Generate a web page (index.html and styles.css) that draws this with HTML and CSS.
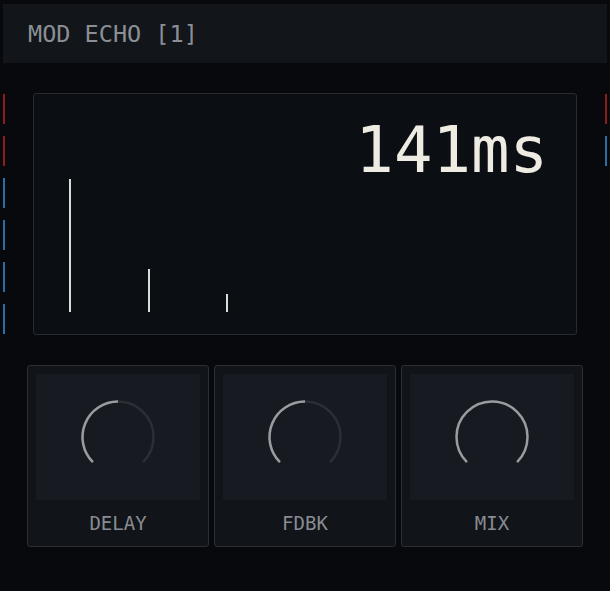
FILE: index.html
```html
<!DOCTYPE html>
<html lang="en">
<head>
    <meta charset="UTF-8">
    <title>Mod Echo</title>
    <meta name="viewport" content="width=device-width, initial-scale=1.0">
    <link rel="stylesheet" href="styles.css">
</head>
<body>
    <div class="header">MOD ECHO [1]</div>

    <div class="main">
        <!-- input level markers -->
        <div class="markers">
            <span class="mark red"></span>
            <span class="mark red"></span>
            <span class="mark blue"></span>
            <span class="mark blue"></span>
            <span class="mark blue"></span>
            <span class="mark blue"></span>
        </div>

        <div class="display">
            <div class="readout">141ms</div>
            <div class="taps">
                <span class="tap" style="height: 133px"></span>
                <span class="tap" style="height: 43px"></span>
                <span class="tap" style="height: 18px"></span>
            </div>
        </div>

        <!-- output level markers -->
        <div class="markers">
            <span class="mark red"></span>
            <span class="mark blue"></span>
        </div>
    </div>

    <div class="knobs">
        <div class="knob">
            <div class="knob-face">
                <svg width="80" height="80" viewBox="0 0 80 80">
                    <path class="track" d="M14.9 65.1 A35.5 35.5 0 1 1 65.1 65.1"/>
                    <path class="value" d="M14.9 65.1 A35.5 35.5 0 0 1 40 4.5"/>
                </svg>
            </div>
            <div class="knob-label">DELAY</div>
        </div>
        <div class="knob">
            <div class="knob-face">
                <svg width="80" height="80" viewBox="0 0 80 80">
                    <path class="track" d="M14.9 65.1 A35.5 35.5 0 1 1 65.1 65.1"/>
                    <path class="value" d="M14.9 65.1 A35.5 35.5 0 0 1 40 4.5"/>
                </svg>
            </div>
            <div class="knob-label">FDBK</div>
        </div>
        <div class="knob">
            <div class="knob-face">
                <svg width="80" height="80" viewBox="0 0 80 80">
                    <path class="value" d="M14.9 65.1 A35.5 35.5 0 1 1 65.1 65.1"/>
                </svg>
            </div>
            <div class="knob-label">MIX</div>
        </div>
    </div>
</body>
</html>
```

FILE: styles.css
```css
body {
    margin: 0;
    background: #07090c;
    font-family: 'DejaVu Sans Mono', monospace;
    color: #8b8f95;
    height: 591px;
    overflow: hidden;
}
.header {
    margin: 4px 3px 0;
    height: 59px;
    padding-left: 25px;
    background: #12151a;
    display: flex;
    align-items: center;
    font-size: 23.5px;
}
.main {
    display: flex;
    align-items: flex-start;
    margin-top: 30px;
}
.markers {
    display: flex;
    flex-direction: column;
    gap: 12px;
    width: 2px;
    margin-left: 3px;
    padding-top: 1px;
}
.mark {
    display: block;
    width: 2px;
    height: 30px;
}
.mark.red {
    background: #8e1c1f;
}
.mark.blue {
    background: #2a6ea8;
}
.display {
    width: 542px;
    height: 240px;
    margin-left: 28px;
    margin-right: 25px;
    border: 1px solid #262a31;
    border-radius: 3px;
    background: #0b0e13;
    display: grid;
    grid-template-areas: "all";
}
.readout {
    grid-area: all;
    justify-self: end;
    align-self: start;
    margin: 25px 28px 0 0;
    font-size: 64px;
    line-height: 63px;
    color: #eeebe2;
}
.taps {
    grid-area: all;
    align-self: end;
    display: flex;
    align-items: flex-end;
    gap: 76px;
    padding: 0 0 22px 35px;
}
.tap {
    display: block;
    width: 2px;
    background: #dcdcdc;
}
.tap + .tap {
    margin-left: 1px;
}
.tap + .tap + .tap {
    margin-left: 0;
}
.knobs {
    display: flex;
    gap: 5px;
    margin: 30px 0 0 27px;
    width: 556px;
}
.knob {
    flex: 1;
    box-sizing: border-box;
    height: 182px;
    border: 1px solid #2a2e35;
    border-radius: 3px;
    background: #111419;
    padding: 8px 8px 0;
    display: flex;
    flex-direction: column;
}
.knob-face {
    height: 126px;
    background: #171a21;
    display: flex;
    align-items: center;
    justify-content: center;
}
.knob-face svg {
    display: block;
}
.knob-face path {
    fill: none;
    stroke-width: 2.5;
}
.track {
    stroke: #2b2e35;
}
.value {
    stroke: #9a9ca0;
}
.knob-label {
    flex: 1;
    display: flex;
    align-items: center;
    justify-content: center;
    font-size: 19px;
    color: #888c92;
}
```
